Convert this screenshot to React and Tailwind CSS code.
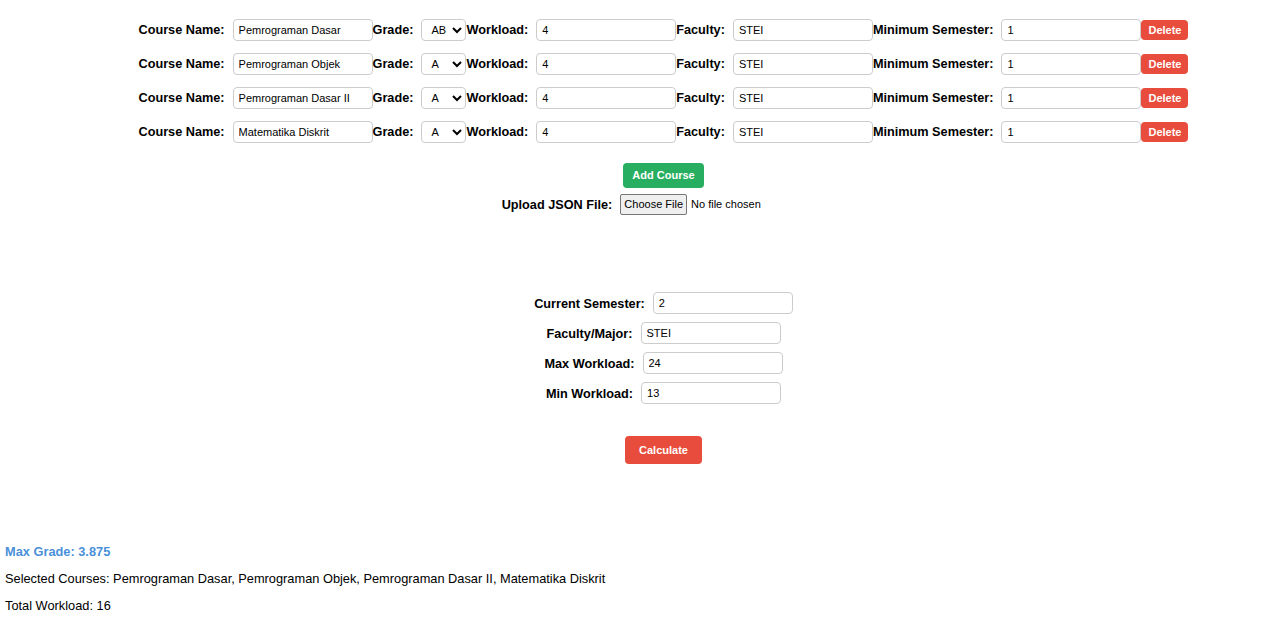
import { useState } from "react";

const initialCourses = [
  { name: "Pemrograman Dasar", grade: "AB", workload: "4", faculty: "STEI", minSemester: "1" },
  { name: "Pemrograman Objek", grade: "A", workload: "4", faculty: "STEI", minSemester: "1" },
  { name: "Pemrograman Dasar II", grade: "A", workload: "4", faculty: "STEI", minSemester: "1" },
  { name: "Matematika Diskrit", grade: "A", workload: "4", faculty: "STEI", minSemester: "1" },
];

const grades = ["A", "AB", "B", "BC", "C", "D", "E"];

const inputCls =
  "w-[140px] h-[22px] px-[5px] border border-[#ccc] rounded-[4px] text-[11px] text-black bg-white outline-none";
const labelCls = "text-[12.7px] font-bold text-black mr-2 pt-[2px]";

function CourseRow({ course, onChange, onDelete }) {
  return (
    <div className="flex items-center justify-center mb-3">
      <label className={labelCls}>Course Name:</label>
      <input className={inputCls} value={course.name} onChange={(e) => onChange("name", e.target.value)} />
      <label className={labelCls}>Grade:</label>
      <select
        className="w-[45px] h-[22px] pl-[5px] border border-[#ccc] rounded-[4px] text-[11px] text-black bg-white"
        value={course.grade}
        onChange={(e) => onChange("grade", e.target.value)}
      >
        {grades.map((g) => (
          <option key={g} value={g}>
            {g}
          </option>
        ))}
      </select>
      <label className={labelCls}>Workload:</label>
      <input className={inputCls} value={course.workload} onChange={(e) => onChange("workload", e.target.value)} />
      <label className={labelCls}>Faculty:</label>
      <input className={inputCls} value={course.faculty} onChange={(e) => onChange("faculty", e.target.value)} />
      <label className={labelCls}>Minimum Semester:</label>
      <input className={inputCls} value={course.minSemester} onChange={(e) => onChange("minSemester", e.target.value)} />
      <button
        onClick={onDelete}
        className="w-[47px] h-[20px] bg-[#e74c3c] text-white text-[11px] font-bold rounded-[4px]"
      >
        Delete
      </button>
    </div>
  );
}

export default function App() {
  const [courses, setCourses] = useState(initialCourses);
  const [semester, setSemester] = useState("2");
  const [faculty, setFaculty] = useState("STEI");
  const [maxWorkload, setMaxWorkload] = useState("24");
  const [minWorkload, setMinWorkload] = useState("13");

  const updateCourse = (i, key, value) => {
    setCourses((prev) => prev.map((c, idx) => (idx === i ? { ...c, [key]: value } : c)));
  };

  const addCourse = () => {
    setCourses((prev) => [...prev, { name: "", grade: "A", workload: "", faculty: "", minSemester: "" }]);
  };

  return (
    <div className="min-h-screen bg-white text-black" style={{ fontFamily: '"Liberation Sans", Arial, sans-serif' }}>
      {/* Course list */}
      <div className="ml-[62px] pt-[19px]">
        {courses.map((course, i) => (
          <CourseRow
            key={i}
            course={course}
            onChange={(key, value) => updateCourse(i, key, value)}
            onDelete={() => setCourses((prev) => prev.filter((_, idx) => idx !== i))}
          />
        ))}
        <div className="flex justify-center mt-[20px]">
          <button
            onClick={addCourse}
            className="w-[81px] h-[25px] bg-[#27ae60] text-white text-[11px] font-bold rounded-[4px]"
          >
            Add Course
          </button>
        </div>
      </div>

      <div className="flex justify-center items-center mt-[6px]">
        <label className="text-[12.7px] font-bold mr-2 pt-[2px]">Upload JSON File:</label>
        <input
          type="file"
          accept=".json"
          className="text-[11px] w-[143px] file:text-[11px] file:border file:border-[#767676] file:bg-[#efefef] file:rounded-[2px] file:px-[3px] file:py-[1px] file:mr-[4px] file:text-black"
        />
      </div>

      {/* Parameters */}
      <div className="ml-[62px] mt-[77px] flex flex-col items-center gap-2">
        <div className="flex items-center">
          <label className={labelCls}>Current Semester:</label>
          <input className={inputCls} value={semester} onChange={(e) => setSemester(e.target.value)} />
        </div>
        <div className="flex items-center">
          <label className={labelCls}>Faculty/Major:</label>
          <input className={inputCls} value={faculty} onChange={(e) => setFaculty(e.target.value)} />
        </div>
        <div className="flex items-center">
          <label className={labelCls}>Max Workload:</label>
          <input className={inputCls} value={maxWorkload} onChange={(e) => setMaxWorkload(e.target.value)} />
        </div>
        <div className="flex items-center">
          <label className={labelCls}>Min Workload:</label>
          <input className={inputCls} value={minWorkload} onChange={(e) => setMinWorkload(e.target.value)} />
        </div>
        <button className="mt-[24px] w-[77px] h-[28px] bg-[#e74c3c] text-white text-[11px] font-bold rounded-[4px]">
          Calculate
        </button>
      </div>

      {/* Results */}
      <div className="px-[5px] mt-[78px] text-[12.8px]">
        <p className="font-bold text-[#4a90d9]">Max Grade: 3.875</p>
        <p className="mt-[8px]">
          Selected Courses: Pemrograman Dasar, Pemrograman Objek, Pemrograman Dasar II, Matematika Diskrit
        </p>
        <p className="mt-[8px]">Total Workload: 16</p>
      </div>
    </div>
  );
}
